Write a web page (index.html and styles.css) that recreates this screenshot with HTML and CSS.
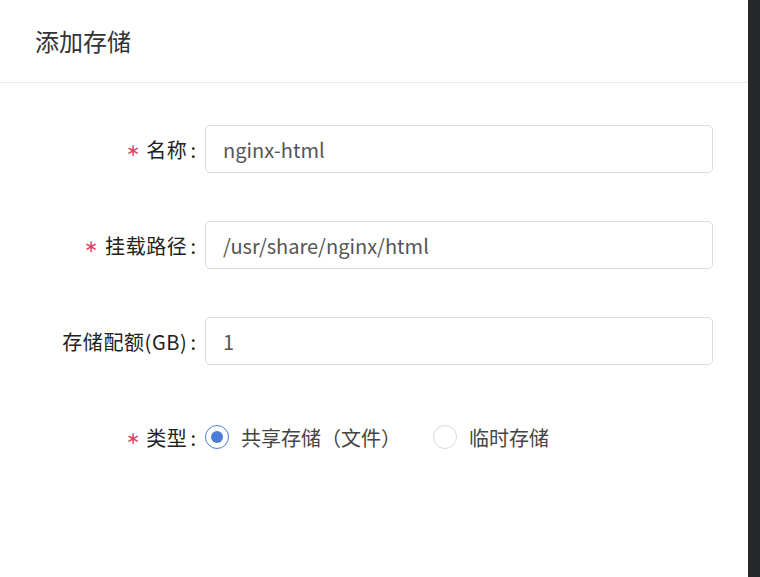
FILE: index.html
```html
<!DOCTYPE html>
<html lang="zh">
<head>
<meta charset="utf-8">
<link rel="stylesheet" href="styles.css">
</head>
<body>
<div class="screen">
  <div class="panel">
    <div class="header"><h1 class="title">添加存储</h1></div>
    <form class="form">
      <div class="row">
        <label class="label"><span class="req">∗</span>名称<span class="colon">:</span></label>
        <div class="input">nginx-html</div>
      </div>
      <div class="row">
        <label class="label"><span class="req">∗</span>挂载路径<span class="colon">:</span></label>
        <div class="input">/usr/share/nginx/html</div>
      </div>
      <div class="row">
        <label class="label">存储配额(GB)<span class="colon">:</span></label>
        <div class="input">1</div>
      </div>
      <div class="row">
        <label class="label"><span class="req">∗</span>类型<span class="colon">:</span></label>
        <div class="radios">
          <span class="radio checked"><span class="dot"></span></span>
          <span class="rtext">共享存储（文件）</span>
          <span class="radio"></span>
          <span class="rtext">临时存储</span>
        </div>
      </div>
    </form>
  </div>
  <div class="side"></div>
</div>
</body>
</html>
```

FILE: styles.css
```css
html, body {
  margin: 0;
  padding: 0;
  height: 100%;
}
body {
  font-family: "Noto Sans CJK SC", "Noto Sans", sans-serif;
  color: #333;
}
.screen {
  display: flex;
  width: 760px;
  height: 577px;
}
.panel {
  width: 748px;
  background: #fff;
}
.side {
  width: 12px;
  background: #262728;
}
.header {
  height: 82px;
  border-bottom: 1px solid #e8e8e8;
  display: flex;
  align-items: center;
  padding-left: 35px;
}
.title {
  margin: 0;
  font-size: 24px;
  font-weight: 400;
  color: #333;
  line-height: 1;
}
.form {
  padding-top: 42px;
  display: flex;
  flex-direction: column;
  gap: 48px;
}
.row {
  display: flex;
  align-items: center;
  height: 48px;
}
.label {
  width: 205px;
  padding-right: 9px;
  box-sizing: border-box;
  text-align: right;
  font-size: 20px;
  letter-spacing: 0.6px;
  color: #222;
  white-space: nowrap;
  display: flex;
  justify-content: flex-end;
  align-items: center;
}
.colon {
  margin-left: 3px;
  letter-spacing: 0;
}
.req {
  color: #e0415c;
  margin-right: 6px;
  font-size: 17px;
  line-height: 1;
  position: relative;
  top: -1px;
}
.input {
  width: 508px;
  height: 48px;
  box-sizing: border-box;
  border: 1px solid #dcdcdc;
  border-radius: 5px;
  padding-left: 17px;
  display: flex;
  align-items: center;
  font-size: 20px;
  color: #555;
}
.radios {
  display: flex;
  align-items: center;
}
.radio {
  width: 24px;
  height: 24px;
  box-sizing: border-box;
  border-radius: 50%;
  border: 1px solid #d8d8d8;
  display: flex;
  align-items: center;
  justify-content: center;
}
.radio.checked {
  border-color: #4d7bd6;
}
.dot {
  width: 12px;
  height: 12px;
  border-radius: 50%;
  background: #4d7bd6;
}
.rtext {
  font-size: 20px;
  color: #444;
  margin-left: 12px;
  margin-right: 32px;
}
```
